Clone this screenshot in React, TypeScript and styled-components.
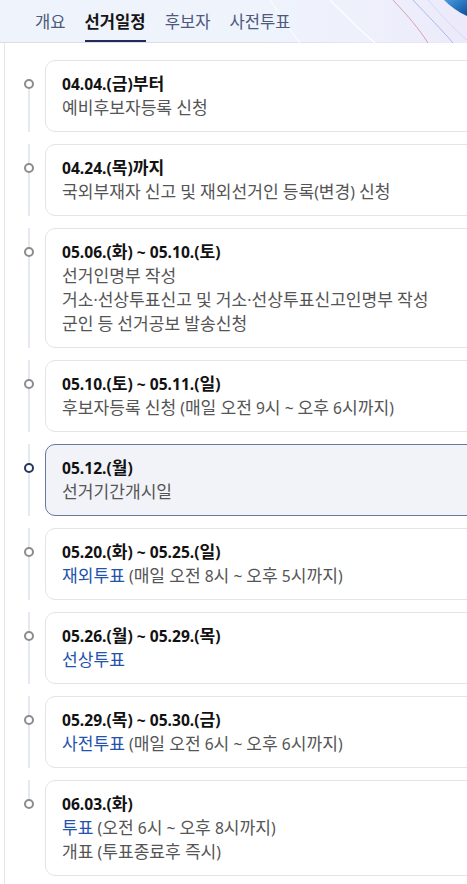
import React from "react";
import styled, { createGlobalStyle } from "styled-components";

type Line = { hl?: string; text: string };
type Item = { date: string; lines: Line[]; active?: boolean };

const tabs = ["개요", "선거일정", "후보자", "사전투표"];

const schedule: Item[] = [
  { date: "04.04.(금)부터", lines: [{ text: "예비후보자등록 신청" }] },
  {
    date: "04.24.(목)까지",
    lines: [{ text: "국외부재자 신고 및 재외선거인 등록(변경) 신청" }],
  },
  {
    date: "05.06.(화) ~ 05.10.(토)",
    lines: [
      { text: "선거인명부 작성" },
      { text: "거소·선상투표신고 및 거소·선상투표신고인명부 작성" },
      { text: "군인 등 선거공보 발송신청" },
    ],
  },
  {
    date: "05.10.(토) ~ 05.11.(일)",
    lines: [{ text: "후보자등록 신청 (매일 오전 9시 ~ 오후 6시까지)" }],
  },
  { date: "05.12.(월)", lines: [{ text: "선거기간개시일" }], active: true },
  {
    date: "05.20.(화) ~ 05.25.(일)",
    lines: [{ hl: "재외투표", text: " (매일 오전 8시 ~ 오후 5시까지)" }],
  },
  { date: "05.26.(월) ~ 05.29.(목)", lines: [{ hl: "선상투표", text: "" }] },
  {
    date: "05.29.(목) ~ 05.30.(금)",
    lines: [{ hl: "사전투표", text: " (매일 오전 6시 ~ 오후 6시까지)" }],
  },
  {
    date: "06.03.(화)",
    lines: [
      { hl: "투표", text: " (오전 6시 ~ 오후 8시까지)" },
      { text: "개표 (투표종료후 즉시)" },
    ],
  },
];

// 한글 부분만 살짝 크게 (원본 폰트의 한글 폭에 맞추기 위함)
function Mixed({ text }: { text: string }) {
  const parts = text.split(/([\uAC00-\uD7A3]+)/);
  return (
    <>
      {parts.map((p, i) =>
        /[\uAC00-\uD7A3]/.test(p) ? <S.Ko key={i}>{p}</S.Ko> : p
      )}
    </>
  );
}

export default function App() {
  return (
    <>
      <GlobalStyle />
      <S.Page>
        <S.Header>
          <S.Decoration viewBox="0 0 217 43" preserveAspectRatio="none">
            <defs>
              <linearGradient id="blob" x1="0" y1="0" x2="1" y2="1">
                <stop offset="0" stopColor="#4a9be0" />
                <stop offset="1" stopColor="#0b4f9c" />
              </linearGradient>
              <linearGradient id="tint" x1="0" y1="0" x2="1" y2="0">
                <stop offset="0" stopColor="#eef2fc" stopOpacity="0" />
                <stop offset="1" stopColor="#ece9fa" />
              </linearGradient>
            </defs>
            <rect x="0" y="0" width="217" height="43" fill="url(#tint)" />
            <path d="M20 0 C 30 15, 40 30, 50 43" stroke="#ffffff" strokeWidth="1" fill="none" />
            <path d="M80 0 C 95 15, 110 30, 125 43" stroke="#ffffff" strokeWidth="1.2" fill="none" />
            <path d="M143 0 C 158 16, 170 30, 178 43" stroke="#d695ab" strokeWidth="0.9" fill="none" />
            <path d="M163 0 C 178 16, 192 30, 203 43" stroke="#9cb6e8" strokeWidth="0.9" fill="none" />
            <path d="M178 0 C 192 16, 205 30, 217 40" stroke="#c5d4f2" strokeWidth="0.7" fill="none" />
            <path d="M194 0 C 200 6, 208 12, 217 16 L217 0 Z" fill="url(#blob)" />
          </S.Decoration>
          <S.Tabs>
            {tabs.map((t) => (
              <S.Tab key={t} $active={t === "선거일정"}>
                {t}
              </S.Tab>
            ))}
          </S.Tabs>
        </S.Header>

        <S.Body>
          <S.List>
            {schedule.map((item, i) => (
              <S.Item key={item.date} $last={i === schedule.length - 1}>
                <S.Rail>
                  <S.Segment $hidden={i === 0} $fixed />
                  <S.Dot $active={!!item.active} />
                  <S.Segment $hidden={i === schedule.length - 1} />
                </S.Rail>
                <S.Card $active={!!item.active}>
                  <S.Date>
                    <Mixed text={item.date} />
                  </S.Date>
                  {item.lines.map((l, j) => (
                    <S.Desc key={j}>
                      {l.hl && (
                        <S.Highlight>
                          <Mixed text={l.hl} />
                        </S.Highlight>
                      )}
                      <Mixed text={l.text} />
                    </S.Desc>
                  ))}
                </S.Card>
              </S.Item>
            ))}
          </S.List>
        </S.Body>
      </S.Page>
    </>
  );
}

const GlobalStyle = createGlobalStyle`
  html, body {
    margin: 0;
    padding: 0;
    background: #ffffff;
    overflow: hidden;
  }
  body {
    font-family: "Noto Sans", "Noto Sans CJK KR", sans-serif;
  }
`;

const S = {
  Page: styled.div`
    width: 467px;
    height: 884px;
    overflow: hidden;
    background: #ffffff;
  `,
  Header: styled.div`
    position: relative;
    height: 42px;
    background: #eff3fc;
    border-bottom: 1px solid #dcdde2;
  `,
  Decoration: styled.svg`
    position: absolute;
    right: 0;
    top: 0;
    width: 217px;
    height: 43px;
  `,
  Tabs: styled.div`
    position: relative;
    display: flex;
    gap: 19px;
    height: 42px;
    padding-left: 35px;
  `,
  Tab: styled.div<{ $active: boolean }>`
    display: flex;
    align-items: center;
    box-sizing: border-box;
    height: 42px;
    padding-top: 1px;
    font-family: "Noto Sans CJK KR", sans-serif;
    font-size: 16.6px;
    font-weight: ${({ $active }) => ($active ? 700 : 400)};
    color: ${({ $active }) => ($active ? "#151515" : "#4d5a7c")};
    border-bottom: 2px solid
      ${({ $active }) => ($active ? "#1f2c57" : "transparent")};
  `,
  Body: styled.div`
    margin-left: 4px;
    border-left: 1px solid #e6e6e6;
    height: 841px;
    padding-top: 17px;
    box-sizing: border-box;
  `,
  List: styled.div`
    display: flex;
    flex-direction: column;
    padding-left: 19px;
  `,
  Item: styled.div<{ $last: boolean }>`
    display: flex;
    gap: 11px;
    padding-bottom: ${({ $last }) => ($last ? 0 : 12)}px;
  `,
  Rail: styled.div`
    display: flex;
    flex-direction: column;
    align-items: center;
    width: 10px;
    flex: none;
  `,
  Segment: styled.div<{ $hidden: boolean; $fixed?: boolean }>`
    width: 2px;
    background: ${({ $hidden }) => ($hidden ? "transparent" : "#e4e9f1")};
    ${({ $fixed }) => ($fixed ? "height: 19px; flex: none;" : "flex: 1;")}
  `,
  Dot: styled.div<{ $active: boolean }>`
    box-sizing: border-box;
    width: 10px;
    height: 10px;
    flex: none;
    border-radius: 50%;
    background: #ffffff;
    border: ${({ $active }) =>
      $active ? "2.5px solid #28365f" : "2px solid #8c8c8c"};
  `,
  Card: styled.div<{ $active: boolean }>`
    width: 460px;
    flex: none;
    padding: 11px 16px;
    border-radius: 10px;
    border: 1px solid ${({ $active }) => ($active ? "#6677a3" : "#e4e4e4")};
    background: ${({ $active }) => ($active ? "#f1f3f8" : "#ffffff")};
  `,
  Date: styled.div`
    height: 24px;
    font-size: 15.6px;
    line-height: 24px;
    font-weight: 700;
    color: #121212;
    white-space: nowrap;
  `,
  Desc: styled.div`
    height: 24px;
    font-size: 15.6px;
    line-height: 24px;
    color: #555555;
    white-space: nowrap;
  `,
  Ko: styled.span`
    font-family: "Noto Sans CJK KR", sans-serif;
    font-size: 17.1px;
    line-height: 0;
  `,
  Highlight: styled.span`
    color: #2453ad;
  `,
};
